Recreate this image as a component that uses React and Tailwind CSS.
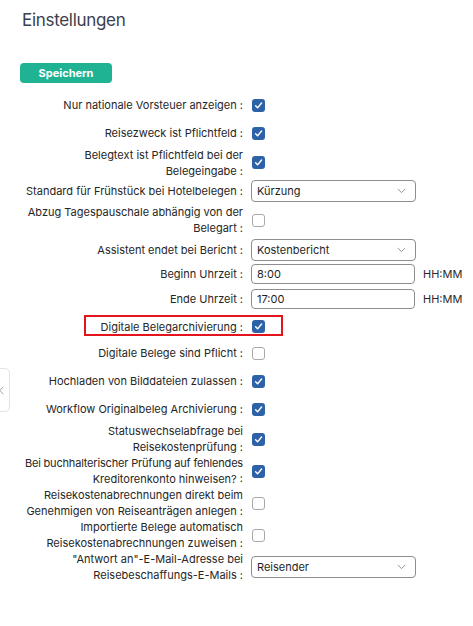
import React from "react";

const font = { fontFamily: "Inter, 'Noto Sans', sans-serif" };

function Check({ checked }) {
  if (checked) {
    return (
      <div className="ml-[9px] flex h-[13px] w-[13px] items-center justify-center rounded-[3px] bg-[#2e62a6]">
        <svg width="9" height="9" viewBox="0 0 10 10" fill="none">
          <path d="M1.8 5.4 L4 7.6 L8.4 2.2" stroke="white" strokeWidth="1.6" strokeLinecap="round" strokeLinejoin="round" />
        </svg>
      </div>
    );
  }
  return <div className="ml-[9px] h-[13px] w-[13px] rounded-[3px] border border-[#a9a9a9] bg-white" />;
}

function Select({ value }) {
  return (
    <div className="ml-[8px] flex h-[22px] w-[165px] items-center justify-between rounded-[4px] border border-[#8d8d8d] bg-white pl-[5px] pr-[9px] text-[11px] text-[#1f1f1f]">
      <span>{value}</span>
      <svg width="9" height="6" viewBox="0 0 9 6" fill="none">
        <path d="M0.8 1 L4.5 4.6 L8.2 1" stroke="#888" strokeWidth="0.9" />
      </svg>
    </div>
  );
}

function Input({ value }) {
  return (
    <div className="ml-[8px] flex items-center">
      <div className="flex h-[20px] w-[164px] items-center rounded-[4px] border border-[#8d8d8d] bg-white pl-[5px] text-[11px] text-[#1f1f1f]">
        {value}
      </div>
      <span className="ml-[8px] text-[11px] text-[#2a2a2a]">HH:MM</span>
    </div>
  );
}

const rows = [
  { h: 28, label: ["Nur nationale Vorsteuer anzeigen :"], c: { t: "check", v: true } },
  { h: 28, label: ["Reisezweck ist Pflichtfeld :"], c: { t: "check", v: true } },
  { h: 31, label: ["Belegtext ist Pflichtfeld bei der", "Belegeingabe :"], c: { t: "check", v: true } },
  { h: 26, label: ["Standard für Frühstück bei Hotelbelegen :"], c: { t: "select", v: "Kürzung" } },
  { h: 32, label: ["Abzug Tagespauschale abhängig von der", "Belegart :"], c: { t: "check", v: false } },
  { h: 28, label: ["Assistent endet bei Bericht :"], c: { t: "select", v: "Kostenbericht" } },
  { h: 20, label: ["Beginn Uhrzeit :"], c: { t: "input", v: "8:00" } },
  { h: 30, label: ["Ende Uhrzeit :"], c: { t: "input", v: "17:00" } },
  { h: 25, label: ["Digitale Belegarchivierung :"], c: { t: "check", v: true }, hl: true },
  { h: 28, label: ["Digitale Belege sind Pflicht :"], c: { t: "check", v: false } },
  { h: 28, label: ["Hochladen von Bilddateien zulassen :"], c: { t: "check", v: true } },
  { h: 28, label: ["Workflow Originalbeleg Archivierung :"], c: { t: "check", v: true } },
  { h: 32, label: ["Statuswechselabfrage bei", "Reisekostenprüfung :"], c: { t: "check", v: true } },
  { h: 32, label: ["Bei buchhalterischer Prüfung auf fehlendes", "Kreditorenkonto hinweisen? :"], c: { t: "check", v: true }, tight: 0 },
  { h: 32, label: ["Reisekostenabrechnungen direkt beim", "Genehmigen von Reiseanträgen anlegen :"], c: { t: "check", v: false } },
  { h: 32, label: ["Importierte Belege automatisch", "Reisekostenabrechnungen zuweisen :"], c: { t: "check", v: false } },
  { h: 32, label: ["\"Antwort an\"-E-Mail-Adresse bei", "Reisebeschaffungs-E-Mails :"], c: { t: "select", v: "Reisender" } },
];

export default function App() {
  return (
    <div style={font} className="relative h-[626px] w-[473px] overflow-hidden bg-white">
      <div className="pl-[22px] pt-[8px] text-[17px] leading-[24px] tracking-[-0.3px] text-[#3b404b]">Einstellungen</div>
      <div className="ml-[20px] mt-[31px] flex h-[20px] w-[92px] items-center justify-center rounded-[4px] bg-[#1fb394] text-[11px] font-bold text-white">
        Speichern
      </div>
      <div className="mt-[8px] flex flex-col">
        {rows.map((r, i) => (
          <div key={i} className="relative flex items-center" style={{ height: r.h }}>
            {r.hl && (
              <div className="pointer-events-none absolute left-[84px] top-[1px] h-[21px] w-[199px] border-2 border-[#e3141b]" />
            )}
            <div className="w-[243px] whitespace-nowrap text-right text-[11px] leading-[16px] text-[#262626]">
              {r.label.map((l, j) => (
                <div key={j} className={r.tight === j ? "tracking-[-0.18px]" : ""}>
                  {l}
                </div>
              ))}
            </div>
            {r.c.t === "check" && <Check checked={r.c.v} />}
            {r.c.t === "select" && <Select value={r.c.v} />}
            {r.c.t === "input" && <Input value={r.c.v} />}
          </div>
        ))}
      </div>
      <div className="absolute left-[-6px] top-[368px] flex h-[44px] w-[16px] items-center justify-end rounded-[5px] border border-[#dfe4ea] bg-white pr-[5px]">
        <svg width="5" height="9" viewBox="0 0 5 9" fill="none">
          <path d="M4.3 0.7 L0.9 4.5 L4.3 8.3" stroke="#999" strokeWidth="0.9" />
        </svg>
      </div>
    </div>
  );
}
